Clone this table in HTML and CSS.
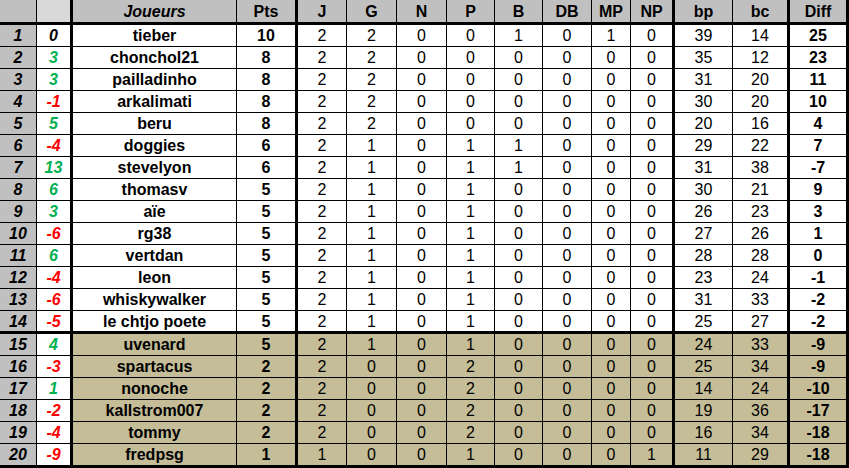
FILE: index.html
```html
<!DOCTYPE html>
<html lang="fr">
<head>
<meta charset="utf-8">
<title>Classement</title>
<link rel="stylesheet" href="styles.css">
</head>
<body>
<div class="table">
  <div class="row head">
    <div class="c rank"></div><div class="c var"></div><div class="c name">Joueurs</div><div class="c pts">Pts</div><div class="c">J</div><div class="c">G</div><div class="c">N</div><div class="c">P</div><div class="c">B</div><div class="c">DB</div><div class="c">MP</div><div class="c np">NP</div><div class="c">bp</div><div class="c bc">bc</div><div class="c diff">Diff</div>
  </div>
  <div class="row"><div class="c rank">1</div><div class="c var zero">0</div><div class="c name">tieber</div><div class="c pts">10</div><div class="c">2</div><div class="c">2</div><div class="c">0</div><div class="c">0</div><div class="c">1</div><div class="c">0</div><div class="c">1</div><div class="c np">0</div><div class="c">39</div><div class="c bc">14</div><div class="c diff">25</div></div>
  <div class="row"><div class="c rank">2</div><div class="c var up">3</div><div class="c name">chonchol21</div><div class="c pts">8</div><div class="c">2</div><div class="c">2</div><div class="c">0</div><div class="c">0</div><div class="c">0</div><div class="c">0</div><div class="c">0</div><div class="c np">0</div><div class="c">35</div><div class="c bc">12</div><div class="c diff">23</div></div>
  <div class="row"><div class="c rank">3</div><div class="c var up">3</div><div class="c name">pailladinho</div><div class="c pts">8</div><div class="c">2</div><div class="c">2</div><div class="c">0</div><div class="c">0</div><div class="c">0</div><div class="c">0</div><div class="c">0</div><div class="c np">0</div><div class="c">31</div><div class="c bc">20</div><div class="c diff">11</div></div>
  <div class="row"><div class="c rank">4</div><div class="c var down">-1</div><div class="c name">arkalimati</div><div class="c pts">8</div><div class="c">2</div><div class="c">2</div><div class="c">0</div><div class="c">0</div><div class="c">0</div><div class="c">0</div><div class="c">0</div><div class="c np">0</div><div class="c">30</div><div class="c bc">20</div><div class="c diff">10</div></div>
  <div class="row"><div class="c rank">5</div><div class="c var up">5</div><div class="c name">beru</div><div class="c pts">8</div><div class="c">2</div><div class="c">2</div><div class="c">0</div><div class="c">0</div><div class="c">0</div><div class="c">0</div><div class="c">0</div><div class="c np">0</div><div class="c">20</div><div class="c bc">16</div><div class="c diff">4</div></div>
  <div class="row"><div class="c rank">6</div><div class="c var down">-4</div><div class="c name">doggies</div><div class="c pts">6</div><div class="c">2</div><div class="c">1</div><div class="c">0</div><div class="c">1</div><div class="c">1</div><div class="c">0</div><div class="c">0</div><div class="c np">0</div><div class="c">29</div><div class="c bc">22</div><div class="c diff">7</div></div>
  <div class="row"><div class="c rank">7</div><div class="c var up">13</div><div class="c name">stevelyon</div><div class="c pts">6</div><div class="c">2</div><div class="c">1</div><div class="c">0</div><div class="c">1</div><div class="c">1</div><div class="c">0</div><div class="c">0</div><div class="c np">0</div><div class="c">31</div><div class="c bc">38</div><div class="c diff">-7</div></div>
  <div class="row"><div class="c rank">8</div><div class="c var up">6</div><div class="c name">thomasv</div><div class="c pts">5</div><div class="c">2</div><div class="c">1</div><div class="c">0</div><div class="c">1</div><div class="c">0</div><div class="c">0</div><div class="c">0</div><div class="c np">0</div><div class="c">30</div><div class="c bc">21</div><div class="c diff">9</div></div>
  <div class="row"><div class="c rank">9</div><div class="c var up">3</div><div class="c name">aïe</div><div class="c pts">5</div><div class="c">2</div><div class="c">1</div><div class="c">0</div><div class="c">1</div><div class="c">0</div><div class="c">0</div><div class="c">0</div><div class="c np">0</div><div class="c">26</div><div class="c bc">23</div><div class="c diff">3</div></div>
  <div class="row"><div class="c rank">10</div><div class="c var down">-6</div><div class="c name">rg38</div><div class="c pts">5</div><div class="c">2</div><div class="c">1</div><div class="c">0</div><div class="c">1</div><div class="c">0</div><div class="c">0</div><div class="c">0</div><div class="c np">0</div><div class="c">27</div><div class="c bc">26</div><div class="c diff">1</div></div>
  <div class="row"><div class="c rank">11</div><div class="c var up">6</div><div class="c name">vertdan</div><div class="c pts">5</div><div class="c">2</div><div class="c">1</div><div class="c">0</div><div class="c">1</div><div class="c">0</div><div class="c">0</div><div class="c">0</div><div class="c np">0</div><div class="c">28</div><div class="c bc">28</div><div class="c diff">0</div></div>
  <div class="row"><div class="c rank">12</div><div class="c var down">-4</div><div class="c name">leon</div><div class="c pts">5</div><div class="c">2</div><div class="c">1</div><div class="c">0</div><div class="c">1</div><div class="c">0</div><div class="c">0</div><div class="c">0</div><div class="c np">0</div><div class="c">23</div><div class="c bc">24</div><div class="c diff">-1</div></div>
  <div class="row"><div class="c rank">13</div><div class="c var down">-6</div><div class="c name">whiskywalker</div><div class="c pts">5</div><div class="c">2</div><div class="c">1</div><div class="c">0</div><div class="c">1</div><div class="c">0</div><div class="c">0</div><div class="c">0</div><div class="c np">0</div><div class="c">31</div><div class="c bc">33</div><div class="c diff">-2</div></div>
  <div class="row sep"><div class="c rank">14</div><div class="c var down">-5</div><div class="c name">le chtjo poete</div><div class="c pts">5</div><div class="c">2</div><div class="c">1</div><div class="c">0</div><div class="c">1</div><div class="c">0</div><div class="c">0</div><div class="c">0</div><div class="c np">0</div><div class="c">25</div><div class="c bc">27</div><div class="c diff">-2</div></div>
  <div class="row low"><div class="c rank">15</div><div class="c var up">4</div><div class="c name">uvenard</div><div class="c pts">5</div><div class="c">2</div><div class="c">1</div><div class="c">0</div><div class="c">1</div><div class="c">0</div><div class="c">0</div><div class="c">0</div><div class="c np">0</div><div class="c">24</div><div class="c bc">33</div><div class="c diff">-9</div></div>
  <div class="row low"><div class="c rank">16</div><div class="c var down">-3</div><div class="c name">spartacus</div><div class="c pts">2</div><div class="c">2</div><div class="c">0</div><div class="c">0</div><div class="c">2</div><div class="c">0</div><div class="c">0</div><div class="c">0</div><div class="c np">0</div><div class="c">25</div><div class="c bc">34</div><div class="c diff">-9</div></div>
  <div class="row low"><div class="c rank">17</div><div class="c var up">1</div><div class="c name">nonoche</div><div class="c pts">2</div><div class="c">2</div><div class="c">0</div><div class="c">0</div><div class="c">2</div><div class="c">0</div><div class="c">0</div><div class="c">0</div><div class="c np">0</div><div class="c">14</div><div class="c bc">24</div><div class="c diff">-10</div></div>
  <div class="row low"><div class="c rank">18</div><div class="c var down">-2</div><div class="c name">kallstrom007</div><div class="c pts">2</div><div class="c">2</div><div class="c">0</div><div class="c">0</div><div class="c">2</div><div class="c">0</div><div class="c">0</div><div class="c">0</div><div class="c np">0</div><div class="c">19</div><div class="c bc">36</div><div class="c diff">-17</div></div>
  <div class="row low"><div class="c rank">19</div><div class="c var down">-4</div><div class="c name">tommy</div><div class="c pts">2</div><div class="c">2</div><div class="c">0</div><div class="c">0</div><div class="c">2</div><div class="c">0</div><div class="c">0</div><div class="c">0</div><div class="c np">0</div><div class="c">16</div><div class="c bc">34</div><div class="c diff">-18</div></div>
  <div class="row low last"><div class="c rank">20</div><div class="c var down">-9</div><div class="c name">fredpsg</div><div class="c pts">1</div><div class="c">1</div><div class="c">0</div><div class="c">0</div><div class="c">1</div><div class="c">0</div><div class="c">0</div><div class="c">0</div><div class="c np">1</div><div class="c">11</div><div class="c bc">29</div><div class="c diff">-18</div></div>
</div>
</body>
</html>
```

FILE: styles.css
```css
* { box-sizing: border-box; }
html, body { margin: 0; padding: 0; background: #fff; }
body {
  font-family: "Liberation Sans", Arial, sans-serif;
  font-size: 16px;
  color: #000;
}
.table {
  width: 849px;
}
.row {
  display: grid;
  grid-template-columns: 37px 36px 164px 61px 49px 50px 50px 48px 48px 49px 39px 44px 58px 57px 59px;
  height: 22px;
}
.c {
  display: flex;
  align-items: center;
  justify-content: center;
  border-right: 1px solid #000;
  border-bottom: 1px solid #000;
  white-space: nowrap;
  line-height: 1;
  padding-top: 1px;
}
.row .var, .row .pts, .row .np, .row .bc, .row .diff { border-right-width: 3px; }
.rank {
  background: #c0c0c0;
  font-weight: bold;
  font-style: italic;
}
.var { font-weight: bold; font-style: italic; background: #fff; }
.var.up { color: #00b050; }
.var.down { color: #ff0000; }
.name, .pts, .diff { font-weight: bold; }
.head { height: 25px; }
.head .c {
  background: #c0c0c0;
  font-weight: bold;
  border-bottom-width: 3px;
}
.head .var { background: #d9d9d9; }
.head .name { font-style: italic; }
.sep { height: 23px; }
.sep .c { border-bottom-width: 3px; }
.low .c { background: #c4bd97; }
.low .rank { background: #c0c0c0; }
.low .var { background: #fff; }
.last { height: 24px; }
.last .c { border-bottom-width: 3px; }
```
